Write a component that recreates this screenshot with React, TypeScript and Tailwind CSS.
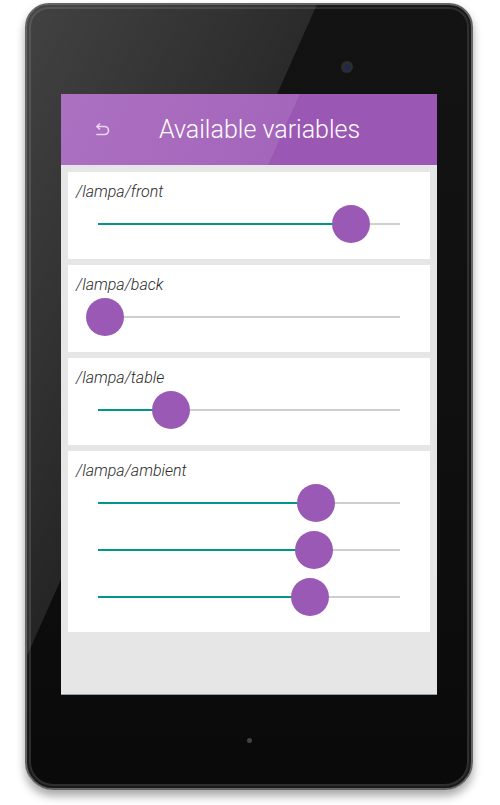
import React from "react";

type SliderProps = { pos: number };

function Slider({ pos }: SliderProps) {
  return (
    <div className="relative mx-[30px] h-[38px]">
      <div className="absolute left-0 right-0 top-[18px] h-[2px] bg-[#cfcfcf]" />
      <div
        className="absolute left-0 top-[18px] h-[2px] bg-[#00968a]"
        style={{ width: pos }}
      />
      <div
        className="absolute top-0 h-[38px] w-[38px] rounded-full bg-[#9b59b6]"
        style={{ left: pos - 19 }}
      />
    </div>
  );
}

function Card({ label, values }: { label: string; values: number[] }) {
  return (
    <div className="bg-white pt-[10px] pb-[16px]">
      <div className="pl-[8px] h-[20px] text-[16px] leading-[20px] italic font-light text-[#2a2a2a] font-['Roboto',sans-serif]">
        {label}
      </div>
      <div className="mt-[3px] flex flex-col gap-[9px]">
        {values.map((v, i) => (
          <Slider key={i} pos={v} />
        ))}
      </div>
    </div>
  );
}

export default function App() {
  return (
    <div className="w-[500px] h-[805px] bg-white overflow-hidden">
      <div className="relative ml-[25px] mt-[3px] w-[448px] h-[787px] rounded-t-[24px] rounded-b-[28px] border-2 border-[#656565] bg-[linear-gradient(180deg,#131313_0%,#101010_45%,#0a0a0a_100%)] shadow-[0_6px_10px_rgba(0,0,0,0.35),inset_0_0_0_2px_#1a1a1a,inset_0_0_0_4px_#2e2e2e]">
        {/* glare on bezel */}
        <div className="pointer-events-none absolute inset-0 rounded-t-[22px] rounded-b-[26px] bg-[linear-gradient(114deg,rgba(255,255,255,0.2)_0%,rgba(255,255,255,0.1)_36.5%,rgba(255,255,255,0)_36.6%)]" />
        {/* camera */}
        <div className="absolute left-[314px] top-[56px] flex h-[12px] w-[12px] items-center justify-center rounded-full bg-[#2c2c2c]">
          <div className="h-[5px] w-[5px] rounded-full bg-[#1c2560]" />
        </div>
        {/* bottom sensor */}
        <div className="absolute left-[220px] top-[733px] h-[5px] w-[5px] rounded-full bg-[#444] blur-[0.5px]" />

        {/* screen */}
        <div className="absolute left-[34px] top-[89px] flex h-[601px] w-[376px] flex-col bg-[#e6e6e6] border-b border-[#8fa2aa]">
          <div className="flex h-[71px] shrink-0 items-center bg-[linear-gradient(114deg,#ac70c1_0%,#a466bb_58.5%,#9a58b4_58.6%,#9a58b4_100%)] pl-[33px]">
            <svg width="16" height="14" viewBox="0 0 16 14" className="shrink-0">
              <path
                d="M3 3.5 H10.5 a4 4 0 0 1 0 8 H3"
                fill="none"
                stroke="#e8d6ef"
                strokeWidth="1.7"
                strokeLinecap="round"
              />
              <path
                d="M5.5 1 L3 3.5 L5.5 6"
                fill="none"
                stroke="#e8d6ef"
                strokeWidth="1.7"
                strokeLinecap="round"
                strokeLinejoin="round"
              />
            </svg>
            <div className="ml-[49px] text-[25px] font-light text-white font-['Roboto',sans-serif] leading-none">
              Available variables
            </div>
          </div>
          <div className="mx-[7px] mt-[7px] flex flex-col gap-[6px]">
            <Card label="/lampa/front" values={[253]} />
            <Card label="/lampa/back" values={[7]} />
            <Card label="/lampa/table" values={[73]} />
            <Card label="/lampa/ambient" values={[218, 216, 212]} />
          </div>
        </div>
      </div>
    </div>
  );
}
